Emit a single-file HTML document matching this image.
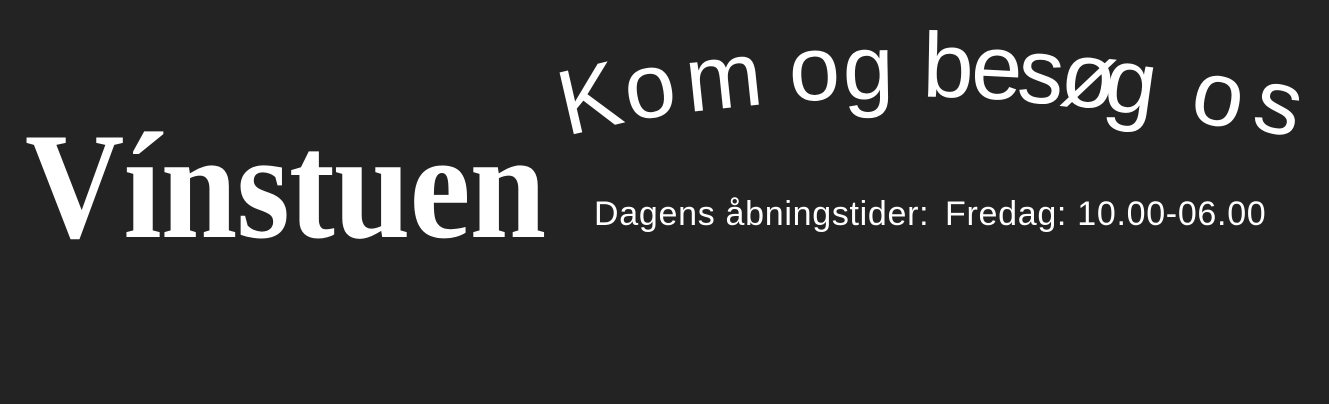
<!DOCTYPE html>
<html><head><meta charset="utf-8"><style>
html,body{margin:0;padding:0;}
body{width:1329px;height:404px;background:#232323;position:relative;overflow:hidden;color:#fff;font-family:"Liberation Sans",sans-serif;}
.l{position:absolute;font-size:92px;line-height:1;transform-origin:50% 80%;}
.logo{position:absolute;left:25px;top:110px;font-family:"Liberation Serif",serif;font-weight:bold;font-size:152px;line-height:1;white-space:nowrap;transform-origin:0 0;transform:scaleX(0.905);letter-spacing:-1px;}
.t{position:absolute;top:197px;font-size:34px;line-height:1;white-space:nowrap;letter-spacing:0.7px;}
</style></head><body>
<div class="logo">Vínstuen</div>
<span class="l" style="left:565px;top:52px;transform:rotate(-13deg)">K</span>
<span class="l" style="left:628px;top:40px;transform:rotate(-9deg)">o</span>
<span class="l" style="left:688px;top:31px;transform:rotate(-6deg)">m</span>
<span class="l" style="left:790px;top:23px;transform:rotate(-3deg)">o</span>
<span class="l" style="left:843px;top:22px;transform:rotate(-1deg)">g</span>
<span class="l" style="left:922px;top:20px;transform:rotate(1deg)">b</span>
<span class="l" style="left:970px;top:22px;transform:rotate(3deg)">e</span>
<span class="l" style="left:1016px;top:26px;transform:rotate(5deg)">s</span>
<span class="l" style="left:1058px;top:30px;transform:rotate(6deg)">ø</span>
<span class="l" style="left:1102px;top:36px;transform:rotate(8deg)">g</span>
<span class="l" style="left:1188px;top:48px;transform:rotate(11deg)">o</span>
<span class="l" style="left:1250px;top:56px;transform:rotate(13deg)">s</span>
<div class="t" style="left:594px">Dagens åbningstider:</div>
<div class="t" style="left:945px">Fredag: 10.00-06.00</div>
</body></html>
